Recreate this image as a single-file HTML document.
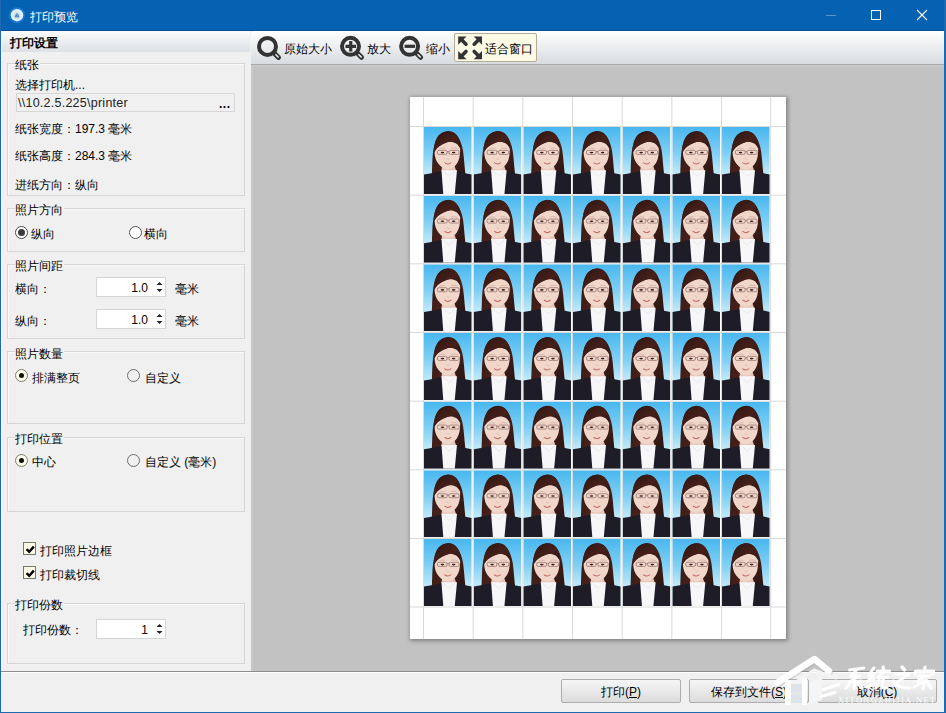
<!DOCTYPE html>
<html><head><meta charset="utf-8">
<style>
*{box-sizing:border-box}
html,body{margin:0;padding:0;width:946px;height:713px;overflow:hidden;background:#f0f0f0}
body{position:relative;font-family:"Liberation Sans",sans-serif;font-size:12px;color:#000}
.a{position:absolute}
.t{position:absolute;white-space:nowrap;line-height:16px}
.c{display:inline-block;text-align:justify;text-align-last:justify}
.g{position:absolute;left:7px;width:238px;border:1px solid #d6d6d6;box-shadow:inset 1px 1px 0 rgba(255,255,255,.6)}
.gt{position:absolute;left:15px;white-space:nowrap;line-height:16px;background:#f0f0f0;padding-right:1px}
.rb{position:absolute;width:13px;height:13px;border-radius:50%;border:1px solid #777;background:#fff}
.rb2{position:absolute;width:13px;height:13px;border-radius:50%;border:1px solid #7d7d70;background:#fdfbea}
.rb3{position:absolute;width:13px;height:13px;border-radius:50%;border:1px solid #6d6d6d;background:transparent}
.sp{position:absolute;width:70px;height:20px;background:#fff;border:1px solid #d5d5d5}
.sp .v{position:absolute;right:17px;top:3px;line-height:14px}
.sp svg{position:absolute;left:59px;top:3px}
.cb{position:absolute;width:13px;height:13px;border:1px solid #77776a;background:#fcfbe9}
.btn{position:absolute;height:24px;border:1px solid #adadad;border-radius:2px;background:linear-gradient(#f6f6f6,#dcdcdc);text-align:center;line-height:14px;padding-top:5px}
</style></head><body>
<!-- window frame -->
<div class="a" style="left:0;top:0;width:946px;height:31px;background:#0562b3;border-bottom:1px solid #0b4f92"></div>
<div class="a" style="left:0;top:0;width:1px;height:713px;background:#1d6ab0"></div>
<div class="a" style="left:944px;top:0;width:2px;height:713px;background:#1d6ab0"></div>
<div class="a" style="left:0;top:712px;width:946px;height:1px;background:#1d6ab0"></div>

<!-- title -->
<svg class="a" style="left:6px;top:4px" width="22" height="22" viewBox="0 0 22 22">
<circle cx="11" cy="11.2" r="8" fill="#1d7ee0" opacity="0.8"/>
<circle cx="11" cy="11.2" r="6.2" fill="#e6f3ff"/>
<circle cx="11" cy="11.2" r="4.2" fill="#d4e8fa"/>
<path d="M8.5 13.5C9 11 10 9.5 11 9C12 9.5 13 11 13.5 13.5Z" fill="#5f93c8"/>
</svg>

<div class="t" style="left:30px;top:9px;color:#fff"><span class="c" style="width:48px">打印预览</span></div>
<div class="a" style="left:826px;top:15px;width:10px;height:1px;background:#5c93c8"></div>
<div class="a" style="left:871px;top:10px;width:10px;height:10px;border:1px solid #fff"></div>
<svg class="a" style="left:916px;top:9px" width="12" height="12" viewBox="0 0 12 12"><path d="M1 1L11 11M11 1L1 11" stroke="#fff" stroke-width="1.1"/></svg>

<!-- left panel header -->
<div class="a" style="left:1px;top:31px;width:249px;height:21px;background:linear-gradient(#fafbfc,#dde1e5)"></div>
<div class="t" style="left:10px;top:35px;font-weight:bold"><span class="c" style="width:48px">打印设置</span></div>


<!-- left panel -->
<div class="a" style="left:1px;top:31px;width:1px;height:640px;background:#fbfdff"></div>


<div class="g" style="top:63px;height:133px"></div>
<div class="gt" style="top:57px"><span class="c" style="width:24px">纸张</span></div>
<div class="t" style="left:15px;top:77px"><span class="c" style="width:60px">选择打印机</span>...</div>
<div class="a" style="left:16px;top:93px;width:219px;height:19px;border:1px solid #d7d7d7;background:#f0f0f0"></div>
<div class="t" style="left:18px;top:95px;color:#222;font-size:12.5px;letter-spacing:0.25px">\\10.2.5.225\printer</div>
<div class="t" style="left:219px;top:96px;font-weight:bold;letter-spacing:0.5px">...</div>
<div class="t" style="left:15px;top:121px"><span class="c" style="width:60px">纸张宽度：</span>197.3 <span class="c" style="width:24px">毫米</span></div>
<div class="t" style="left:15px;top:148px"><span class="c" style="width:60px">纸张高度：</span>284.3 <span class="c" style="width:24px">毫米</span></div>
<div class="t" style="left:15px;top:177px"><span class="c" style="width:84px">进纸方向：纵向</span></div>

<div class="g" style="top:208px;height:44px"></div>
<div class="gt" style="top:202px"><span class="c" style="width:48px">照片方向</span></div>
<div class="rb" style="left:15px;top:226px;border-color:#4a4a4a"></div>
<div class="a" style="left:18px;top:229px;width:7px;height:7px;border-radius:50%;background:#3b3b3b"></div>
<div class="t" style="left:31px;top:226px"><span class="c" style="width:24px">纵向</span></div>
<div class="rb" style="left:129px;top:226px;border-color:#555"></div>
<div class="t" style="left:144px;top:226px"><span class="c" style="width:24px">横向</span></div>

<div class="g" style="top:264px;height:75px"></div>
<div class="gt" style="top:258px"><span class="c" style="width:48px">照片间距</span></div>
<div class="t" style="left:15px;top:281px"><span class="c" style="width:36px">横向：</span></div>
<div class="sp" style="left:96px;top:277px"><span class="v">1.0</span><svg width="7" height="12" viewBox="0 0 7 12"><path d="M0.5 4L3.5 1L6.5 4ZM0.5 8L3.5 11L6.5 8Z" fill="#222"/></svg></div>
<div class="t" style="left:175px;top:281px"><span class="c" style="width:24px">毫米</span></div>
<div class="t" style="left:15px;top:313px"><span class="c" style="width:36px">纵向：</span></div>
<div class="sp" style="left:96px;top:309px"><span class="v">1.0</span><svg width="7" height="12" viewBox="0 0 7 12"><path d="M0.5 4L3.5 1L6.5 4ZM0.5 8L3.5 11L6.5 8Z" fill="#222"/></svg></div>
<div class="t" style="left:175px;top:313px"><span class="c" style="width:24px">毫米</span></div>

<div class="g" style="top:351px;height:73px"></div>
<div class="gt" style="top:346px"><span class="c" style="width:48px">照片数量</span></div>
<div class="rb2" style="left:15px;top:369px"></div>
<div class="a" style="left:19px;top:373px;width:5px;height:5px;border-radius:50%;background:#111"></div>
<div class="t" style="left:32px;top:370px"><span class="c" style="width:48px">排满整页</span></div>
<div class="rb3" style="left:127px;top:369px"></div>
<div class="t" style="left:145px;top:370px"><span class="c" style="width:36px">自定义</span></div>

<div class="g" style="top:437px;height:75px"></div>
<div class="gt" style="top:431px"><span class="c" style="width:48px">打印位置</span></div>
<div class="rb2" style="left:15px;top:454px"></div>
<div class="a" style="left:19px;top:458px;width:5px;height:5px;border-radius:50%;background:#111"></div>
<div class="t" style="left:32px;top:454px"><span class="c" style="width:24px">中心</span></div>
<div class="rb3" style="left:127px;top:454px"></div>
<div class="t" style="left:145px;top:454px"><span class="c" style="width:36px">自定义</span> (<span class="c" style="width:24px">毫米</span>)</div>

<div class="cb" style="left:23px;top:542px"><svg class="a" style="left:1px;top:1px" width="10" height="10" viewBox="0 0 10 10"><path d="M1.6 5.2L4.2 7.8L8.8 2.6" stroke="#000" stroke-width="2.4" fill="none"/></svg></div>
<div class="t" style="left:40px;top:543px"><span class="c" style="width:72px">打印照片边框</span></div>
<div class="cb" style="left:23px;top:566px"><svg class="a" style="left:1px;top:1px" width="10" height="10" viewBox="0 0 10 10"><path d="M1.6 5.2L4.2 7.8L8.8 2.6" stroke="#000" stroke-width="2.4" fill="none"/></svg></div>
<div class="t" style="left:40px;top:567px"><span class="c" style="width:60px">打印裁切线</span></div>

<div class="g" style="top:603px;height:61px"></div>
<div class="gt" style="top:597px"><span class="c" style="width:48px">打印份数</span></div>
<div class="t" style="left:23px;top:622px"><span class="c" style="width:60px">打印份数：</span></div>
<div class="sp" style="left:96px;top:619px"><span class="v">1</span><svg width="7" height="12" viewBox="0 0 7 12"><path d="M0.5 4L3.5 1L6.5 4ZM0.5 8L3.5 11L6.5 8Z" fill="#222"/></svg></div>

<!-- toolbar -->
<div class="a" style="left:251px;top:31px;width:693px;height:34px;background:linear-gradient(#ffffff 0%,#f3f4f5 30%,#d8dce0 100%);border-bottom:1px solid #a9a9a9;border-top-left-radius:3px"></div>

<!-- toolbar items -->
<svg class="a" style="left:254px;top:33px" width="30" height="30" viewBox="-13.50 -13.40 30 30">
<circle cx="0" cy="0" r="8.5" fill="none" stroke="#333" stroke-width="4"/>
<path d="M7.5 7.5L11 11" stroke="#333" stroke-width="5" stroke-linecap="round"/>
<path d="M8.4 8.4L10.6 10.6" stroke="#e6e8ea" stroke-width="1.6" stroke-linecap="round"/>
</svg>
<div class="t" style="left:284px;top:41px"><span class="c" style="width:48px">原始大小</span></div>
<svg class="a" style="left:337px;top:33px" width="30" height="30" viewBox="-13.50 -13.30 30 30">
<circle cx="0" cy="0" r="8.5" fill="none" stroke="#333" stroke-width="4"/>
<path d="M7.5 7.5L11 11" stroke="#333" stroke-width="5" stroke-linecap="round"/>
<path d="M8.4 8.4L10.6 10.6" stroke="#e6e8ea" stroke-width="1.6" stroke-linecap="round"/>
<path d="M-5 0H5.5M0.25 -5.2V5.2" stroke="#333" stroke-width="3.2"/></svg>
<div class="t" style="left:367px;top:41px"><span class="c" style="width:24px">放大</span></div>
<svg class="a" style="left:396px;top:33px" width="30" height="30" viewBox="-13.60 -13.30 30 30">
<circle cx="0" cy="0" r="8.5" fill="none" stroke="#333" stroke-width="4"/>
<path d="M7.5 7.5L11 11" stroke="#333" stroke-width="5" stroke-linecap="round"/>
<path d="M8.4 8.4L10.6 10.6" stroke="#e6e8ea" stroke-width="1.6" stroke-linecap="round"/>
<path d="M-5 0H5.5" stroke="#333" stroke-width="3.2"/></svg>
<div class="t" style="left:426px;top:41px"><span class="c" style="width:24px">缩小</span></div>
<div class="a" style="left:454px;top:33px;width:83px;height:29px;background:#fcf9e4;border:1px solid #b3ad98;border-radius:2px"></div>
<svg class="a" style="left:456px;top:34px" width="30" height="28" viewBox="0 0 30 28">
<g fill="#333">
<path d="M2.2 2.4H10.5L2.2 10.7Z"/><path d="M26 2.4H17.7L26 10.7Z"/>
<path d="M2.2 25.3H10.5L2.2 17Z"/><path d="M26 25.3H17.7L26 17Z"/>
</g>
<g stroke="#333" stroke-width="3.6" stroke-linecap="round">
<path d="M5 5.2L10 10.2M23.2 5.2L18.2 10.2M5 22.5L10 17.5M23.2 22.5L18.2 17.5"/>
</g>
</svg>
<div class="t" style="left:485px;top:41px"><span class="c" style="width:48px">适合窗口</span></div>

<!-- preview area -->
<div class="a" style="left:251px;top:65px;width:693px;height:606px;background:#c2c2c2;border-top:2px solid #c9c9c9;border-left:2px solid #c8c8c8"></div>


<!-- page -->
<div class="a" style="left:410px;top:97px;width:376px;height:542px;background:#fff;box-shadow:1px 1px 4px 1px rgba(0,0,0,.33)"></div>
<svg class="a" style="left:410px;top:97px" width="376" height="542" viewBox="0 0 376 542">
<defs>
<linearGradient id="bgg" x1="0" y1="0" x2="0" y2="1">
<stop offset="0" stop-color="#48b7ef"/><stop offset="0.4" stop-color="#82d0f4"/><stop offset="0.68" stop-color="#bde8f9"/><stop offset="1" stop-color="#d8f2fb"/>
</linearGradient>
<symbol id="ph" viewBox="0 0 470 665" preserveAspectRatio="none">
<rect width="470" height="665" fill="url(#bgg)"/>
<path d="M238 40C190 42 150 70 125 120C100 170 90 230 84 300C80 370 80 430 76 490L410 490C404 430 398 370 392 300C386 220 370 160 345 115C320 70 285 40 238 40Z" fill="url(#hairg)"/>
<path d="M178 385L300 385L325 460L170 460Z" fill="#e6c6b8"/>
<path d="M104 250C106 300 118 335 140 362C168 400 200 420 233 421C268 420 300 400 325 362C345 332 357 290 356 210C350 165 320 140 290 140C220 145 130 190 104 250Z" fill="#f1d6ca"/>
<path d="M96 245C125 200 180 160 240 150C290 142 335 160 356 215C362 150 345 85 290 55C250 38 200 42 160 70C118 100 98 170 96 245Z" fill="url(#hairg)"/>
<path d="M0 472C60 462 120 452 170 440L325 440C370 452 420 462 470 472L470 665L0 665Z" fill="#1e1c27"/>
<path d="M172 430L325 430L303 665L190 665Z" fill="#f7f7f9"/>
<path d="M195 445L250 490L300 445" fill="none" stroke="#dcdce2" stroke-width="5"/>

<rect x="132" y="232" width="96" height="40" rx="14" fill="none" stroke="#5e302c" stroke-width="4.5"/>
<rect x="246" y="232" width="100" height="40" rx="14" fill="none" stroke="#5e302c" stroke-width="4.5"/>
<path d="M228 246Q237 240 246 246" stroke="#5e302c" stroke-width="4.5" fill="none"/>
<ellipse cx="182" cy="254" rx="18" ry="8" fill="#2e1c1a"/>
<ellipse cx="292" cy="254" rx="18" ry="8" fill="#2e1c1a"/>
<path d="M150 218C168 208 192 208 210 214M266 212C285 206 310 206 330 216" stroke="#8a5a4a" stroke-width="4" fill="none" opacity="0.6"/>
<path d="M226 312C230 325 242 328 250 320" stroke="#d8a894" stroke-width="5" fill="none"/>
<path d="M205 355C222 372 250 372 265 355" stroke="#c4645e" stroke-width="10" fill="none" stroke-linecap="round"/>
</symbol>
<linearGradient id="hairg" x1="0" y1="0" x2="1" y2="1">
<stop offset="0" stop-color="#2a1512"/><stop offset="0.55" stop-color="#47201a"/><stop offset="1" stop-color="#261412"/>
</linearGradient>
</defs>
<rect width="376" height="542" fill="#fff"/>
<g stroke="#d9d9d9" stroke-width="1">
<line x1="13.50" y1="0" x2="13.50" y2="542"/>
<line x1="63.17" y1="0" x2="63.17" y2="542"/>
<line x1="112.84" y1="0" x2="112.84" y2="542"/>
<line x1="162.51" y1="0" x2="162.51" y2="542"/>
<line x1="212.18" y1="0" x2="212.18" y2="542"/>
<line x1="261.85" y1="0" x2="261.85" y2="542"/>
<line x1="311.52" y1="0" x2="311.52" y2="542"/>
<line x1="360.72" y1="0" x2="360.72" y2="542"/>
<line x1="0" y1="29.50" x2="376" y2="29.50"/>
<line x1="0" y1="98.17" x2="376" y2="98.17"/>
<line x1="0" y1="166.84" x2="376" y2="166.84"/>
<line x1="0" y1="235.51" x2="376" y2="235.51"/>
<line x1="0" y1="304.18" x2="376" y2="304.18"/>
<line x1="0" y1="372.85" x2="376" y2="372.85"/>
<line x1="0" y1="441.52" x2="376" y2="441.52"/>
<line x1="0" y1="510.02" x2="376" y2="510.02"/>
</g>
<use href="#ph" x="14.00" y="30.00" width="47.7" height="67.0"/>
<use href="#ph" x="63.67" y="30.00" width="47.7" height="67.0"/>
<use href="#ph" x="113.34" y="30.00" width="47.7" height="67.0"/>
<use href="#ph" x="163.01" y="30.00" width="47.7" height="67.0"/>
<use href="#ph" x="212.68" y="30.00" width="47.7" height="67.0"/>
<use href="#ph" x="262.35" y="30.00" width="47.7" height="67.0"/>
<use href="#ph" x="312.02" y="30.00" width="47.7" height="67.0"/>
<use href="#ph" x="14.00" y="98.67" width="47.7" height="67.0"/>
<use href="#ph" x="63.67" y="98.67" width="47.7" height="67.0"/>
<use href="#ph" x="113.34" y="98.67" width="47.7" height="67.0"/>
<use href="#ph" x="163.01" y="98.67" width="47.7" height="67.0"/>
<use href="#ph" x="212.68" y="98.67" width="47.7" height="67.0"/>
<use href="#ph" x="262.35" y="98.67" width="47.7" height="67.0"/>
<use href="#ph" x="312.02" y="98.67" width="47.7" height="67.0"/>
<use href="#ph" x="14.00" y="167.34" width="47.7" height="67.0"/>
<use href="#ph" x="63.67" y="167.34" width="47.7" height="67.0"/>
<use href="#ph" x="113.34" y="167.34" width="47.7" height="67.0"/>
<use href="#ph" x="163.01" y="167.34" width="47.7" height="67.0"/>
<use href="#ph" x="212.68" y="167.34" width="47.7" height="67.0"/>
<use href="#ph" x="262.35" y="167.34" width="47.7" height="67.0"/>
<use href="#ph" x="312.02" y="167.34" width="47.7" height="67.0"/>
<use href="#ph" x="14.00" y="236.01" width="47.7" height="67.0"/>
<use href="#ph" x="63.67" y="236.01" width="47.7" height="67.0"/>
<use href="#ph" x="113.34" y="236.01" width="47.7" height="67.0"/>
<use href="#ph" x="163.01" y="236.01" width="47.7" height="67.0"/>
<use href="#ph" x="212.68" y="236.01" width="47.7" height="67.0"/>
<use href="#ph" x="262.35" y="236.01" width="47.7" height="67.0"/>
<use href="#ph" x="312.02" y="236.01" width="47.7" height="67.0"/>
<use href="#ph" x="14.00" y="304.68" width="47.7" height="67.0"/>
<use href="#ph" x="63.67" y="304.68" width="47.7" height="67.0"/>
<use href="#ph" x="113.34" y="304.68" width="47.7" height="67.0"/>
<use href="#ph" x="163.01" y="304.68" width="47.7" height="67.0"/>
<use href="#ph" x="212.68" y="304.68" width="47.7" height="67.0"/>
<use href="#ph" x="262.35" y="304.68" width="47.7" height="67.0"/>
<use href="#ph" x="312.02" y="304.68" width="47.7" height="67.0"/>
<use href="#ph" x="14.00" y="373.35" width="47.7" height="67.0"/>
<use href="#ph" x="63.67" y="373.35" width="47.7" height="67.0"/>
<use href="#ph" x="113.34" y="373.35" width="47.7" height="67.0"/>
<use href="#ph" x="163.01" y="373.35" width="47.7" height="67.0"/>
<use href="#ph" x="212.68" y="373.35" width="47.7" height="67.0"/>
<use href="#ph" x="262.35" y="373.35" width="47.7" height="67.0"/>
<use href="#ph" x="312.02" y="373.35" width="47.7" height="67.0"/>
<use href="#ph" x="14.00" y="442.02" width="47.7" height="67.0"/>
<use href="#ph" x="63.67" y="442.02" width="47.7" height="67.0"/>
<use href="#ph" x="113.34" y="442.02" width="47.7" height="67.0"/>
<use href="#ph" x="163.01" y="442.02" width="47.7" height="67.0"/>
<use href="#ph" x="212.68" y="442.02" width="47.7" height="67.0"/>
<use href="#ph" x="262.35" y="442.02" width="47.7" height="67.0"/>
<use href="#ph" x="312.02" y="442.02" width="47.7" height="67.0"/>
</svg>

<!-- bottom panel -->
<div class="a" style="left:1px;top:671px;width:943px;height:1px;background:#8c8c8c"></div>
<div class="a" style="left:1px;top:672px;width:943px;height:1px;background:#fff"></div>


<!-- buttons -->
<div class="btn" style="left:561px;top:679px;width:120px"><span class="c" style="width:24px">打印</span>(<u>P</u>)</div>
<div class="btn" style="left:689px;top:679px;width:120px"><span class="c" style="width:60px">保存到文件</span>(<u>S</u>)</div>
<div class="btn" style="left:817px;top:679px;width:120px"><span class="c" style="width:24px">取消</span>(<u>C</u>)</div>
<!-- watermark -->
<svg class="a" style="left:770px;top:652px" width="174" height="58" viewBox="770 652 174 58">
<g fill="none" stroke-linecap="round" stroke-linejoin="round">
<g stroke="#9a9a9a" stroke-width="6.5" opacity="0.35" transform="translate(1,1)">
<path d="M777 683L814.5 659L829 671"/>
</g>
<path d="M777 683L814.5 659L829 671" stroke="#fff" stroke-width="6.5"/>
<path d="M790 686L814 670L836 678" stroke="#f4f4f4" stroke-width="3"/>
</g>
<rect x="785" y="680" width="6" height="25" fill="#fff"/>
<rect x="791" y="684" width="11" height="8" fill="#dde3ea"/>
<rect x="791" y="695" width="11" height="8" fill="#dde3ea"/>
<rect x="802" y="678" width="5" height="27" fill="#fff"/>
<path d="M809 683L822 677V700L809 705Z" fill="#f3f5f7"/>
<path d="M822 690L840 684M820 697L836 692" stroke="#fff" stroke-width="3"/>
<g transform="translate(846,667) skewX(-8)" fill="none" stroke="#fff" stroke-width="3.2" stroke-linecap="round" stroke-linejoin="round" opacity="0.95">
<path d="M4 3L18 1M12 2L6 9L15 9L5 15L17 14M11 14V22M6 17L3 21M15 17L19 21"/>
<path transform="translate(23,0)" d="M5 1L1 8L6 8L1 14L7 13M1 20L7 17M14 0L15 3M9 4H21M15 5L10 11L20 10M12 13L10 21M16 13V20Q16 21 21 21"/>
<path transform="translate(46,0)" d="M10 0L13 3M4 7H18L5 17M3 14Q8 21 21 21"/>
<path transform="translate(68,0)" d="M11 0V3M2 7V4H20V7M5 9H17M11 9L6 14M10 12Q14 16 12 22M11 15L3 20M14 13L20 21"/>
</g>
<text x="838" y="703" font-family="Liberation Serif" font-size="8.5" fill="#fff" letter-spacing="1.3" opacity="0.9">XITONGZHIJIA.NET</text>
</svg>

</body></html>
